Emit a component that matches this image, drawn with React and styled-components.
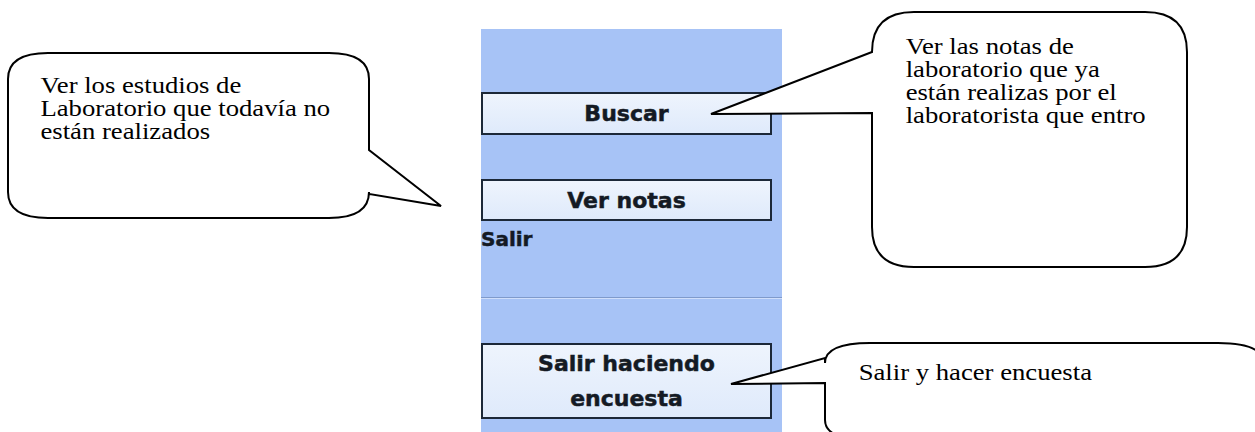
import React from 'react';
import styled, { createGlobalStyle } from 'styled-components';

const GlobalStyle = createGlobalStyle`
  html, body {
    margin: 0;
    padding: 0;
    background: #fff;
    overflow: hidden;
  }
`;

const Page = styled.div`
  position: relative;
  width: 1255px;
  height: 432px;
  overflow: hidden;
  background: #fff;
  display: flex;
  padding: 29px 0 0 481px;
  box-sizing: border-box;
`;

const Panel = styled.div`
  width: 301px;
  height: 403px;
  background: #a7c3f6;
  display: flex;
  flex-direction: column;
  align-items: flex-start;
`;

const PanelButton = styled.div`
  width: 291px;
  height: ${(props) => props.height}px;
  margin-top: ${(props) => props.offset}px;
  box-sizing: border-box;
  border: 2px solid #1c2838;
  background: linear-gradient(#eef4fd, #dfeafb);
  display: flex;
  align-items: center;
  justify-content: center;
  text-align: center;
  font-family: "DejaVu Sans", Verdana, sans-serif;
  font-weight: 700;
  font-size: 22px;
  line-height: 35px;
  color: #141a24;
  -webkit-text-stroke: 0.5px #141a24;
`;

const PanelLabel = styled.div`
  margin-top: 6px;
  font-family: "DejaVu Sans", Verdana, sans-serif;
  font-weight: 700;
  font-size: 20px;
  line-height: 24px;
  color: #141a24;
  -webkit-text-stroke: 0.5px #141a24;
`;

const Divider = styled.div`
  width: 100%;
  margin-top: 46px;
  border-top: 1px solid #7f9acb;
  border-bottom: 1px solid #cfdefb;
`;

const Callout = styled.div`
  position: absolute;
  left: ${(props) => props.x}px;
  top: ${(props) => props.y}px;
  width: ${(props) => props.w}px;
  height: ${(props) => props.h}px;
`;

const CalloutShape = styled.svg`
  position: absolute;
  left: 0;
  top: 0;
  overflow: visible;
`;

const CalloutText = styled.div`
  position: relative;
  padding: ${(props) => props.pad};
  font-family: "Liberation Serif", "Times New Roman", serif;
  font-size: 23px;
  line-height: 23px;
  color: #000;
  white-space: nowrap;
  transform: scaleX(1.16);
  transform-origin: left top;
`;

// rounded-rectangle callout outline with a wedge on the left or right side
function bubblePath(w, h, rx, ry, side, a, tip, b) {
  const top = `M ${rx} 0 H ${w - rx} Q ${w} 0 ${w} ${ry}`;
  if (side === 'right') {
    return `${top} V ${a} L ${tip[0]} ${tip[1]} L ${w} ${b} V ${h - ry} Q ${w} ${h} ${w - rx} ${h} H ${rx} Q 0 ${h} 0 ${h - ry} V ${ry} Q 0 0 ${rx} 0 Z`;
  }
  return `${top} V ${h - ry} Q ${w} ${h} ${w - rx} ${h} H ${rx} Q 0 ${h} 0 ${h - ry} V ${b} L ${tip[0]} ${tip[1]} L 0 ${a} V ${ry} Q 0 0 ${rx} 0 Z`;
}

function Bubble({ x, y, w, h, rx, ry, side, a, tip, b, pad, children }) {
  return (
    <Callout x={x} y={y} w={w} h={h}>
      <CalloutShape width={w} height={h}>
        <path
          d={bubblePath(w, h, rx, ry, side, a, tip, b)}
          fill="#fff"
          stroke="#000"
          strokeWidth="2"
          strokeLinejoin="miter"
        />
      </CalloutShape>
      <CalloutText pad={pad}>{children}</CalloutText>
    </Callout>
  );
}

export default function App() {
  return (
    <>
      <GlobalStyle />
      <Page>
        <Panel>
          <PanelButton offset={63} height={43}>Buscar</PanelButton>
          <PanelButton offset={44} height={42}>Ver notas</PanelButton>
          <PanelLabel>Salir</PanelLabel>
          <Divider />
          <PanelButton offset={44} height={76}>
            Salir haciendo
            <br />
            encuesta
          </PanelButton>
        </Panel>

        <Bubble
          x={8} y={53} w={361} h={165} rx={40} ry={26}
          side="right" a={97} tip={[433, 153]} b={141}
          pad="21px 0 0 28px"
        >
          Ver los estudios de
          <br />
          Laboratorio que todavía no
          <br />
          están realizados
        </Bubble>

        <Bubble
          x={872} y={12} w={315} h={255} rx={42} ry={40}
          side="left" a={40} tip={[-161, 102]} b={101}
          pad="23px 0 0 29px"
        >
          Ver las notas de
          <br />
          laboratorio que ya
          <br />
          están realizas por el
          <br />
          laboratorista que entro
        </Bubble>

        <Bubble
          x={825} y={343} w={438} h={97} rx={45} ry={20}
          side="left" a={15} tip={[-94, 41]} b={40}
          pad="18px 0 0 29px"
        >
          Salir y hacer encuesta
        </Bubble>
      </Page>
    </>
  );
}
